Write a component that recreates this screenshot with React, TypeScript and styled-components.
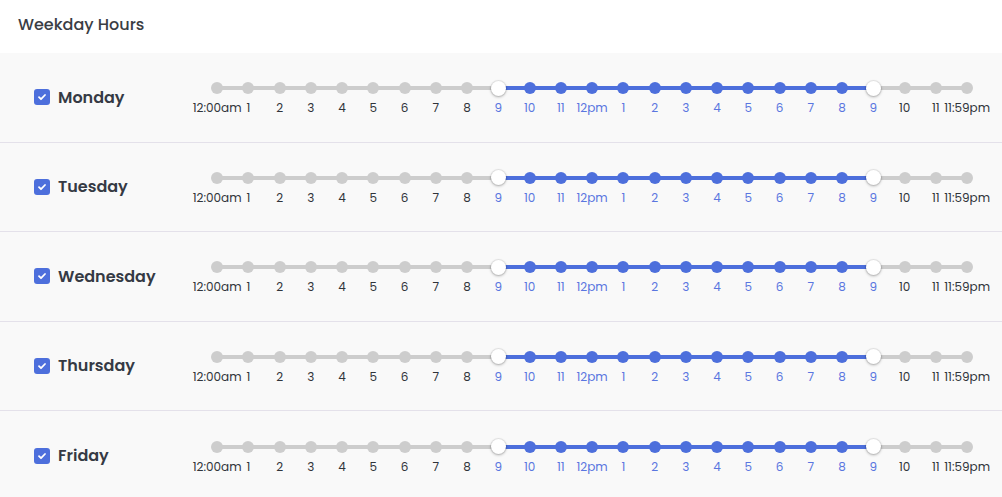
import React from 'react';
import styled, { createGlobalStyle } from 'styled-components';

const GlobalStyle = createGlobalStyle`
    html, body {
        margin: 0;
        padding: 0;
        background: #ffffff;
        font-family: Poppins, Inter, "Noto Sans", sans-serif;
        color: #333840;
    }
`;

const BLUE = '#4d6fdc';
const GRAY = '#cdcdcd';
const STEP = 31.25;

const Page = styled.div`
    width: 1002px;
`;

const Header = styled.div`
    height: 53px;
    display: flex;
    align-items: center;
    padding-left: 18px;
    padding-bottom: 4px;
    box-sizing: border-box;
    font-size: 16px;
    font-weight: 500;
    color: #3a3d44;
`;

const Row = styled.div`
    height: 89.5px;
    display: flex;
    align-items: center;
    background: #f9f9f9;
    border-bottom: 1px solid #e4e1ea;
    box-sizing: border-box;

    &:last-child {
        border-bottom: none;
    }
`;

const DayCell = styled.label`
    width: 201.5px;
    box-sizing: border-box;
    padding-left: 34px;
    display: flex;
    align-items: center;
    gap: 8px;
    font-size: 16px;
    font-weight: 600;
    color: #353a44;
`;

const Check = styled.span`
    width: 16px;
    height: 16px;
    border-radius: 3px;
    background: ${BLUE};
    display: inline-flex;
    align-items: center;
    justify-content: center;
`;

const Slider = styled.div`
    display: grid;
    grid-template-columns: repeat(25, ${STEP}px);
    margin-top: 2px;
`;

const Stop = styled.div`
    display: flex;
    flex-direction: column;
    align-items: center;
    gap: 4px;
`;

const DotArea = styled.div<{ $left?: string; $right?: string }>`
    position: relative;
    width: 100%;
    height: 16px;
    display: flex;
    align-items: center;
    justify-content: center;

    &::before,
    &::after {
        content: '';
        position: absolute;
        top: 6px;
        height: 4px;
        width: 50%;
    }
    &::before {
        left: 0;
        background: ${(p) => p.$left || 'transparent'};
    }
    &::after {
        right: 0;
        background: ${(p) => p.$right || 'transparent'};
    }
`;

const Dot = styled.span<{ $on: boolean }>`
    position: relative;
    z-index: 1;
    width: 12px;
    height: 12px;
    border-radius: 50%;
    background: ${(p) => (p.$on ? BLUE : GRAY)};
`;

const Handle = styled.span`
    position: relative;
    z-index: 2;
    width: 15px;
    height: 15px;
    border-radius: 50%;
    background: #ffffff;
    box-shadow: 0 0 0 1px rgba(0, 0, 0, 0.06), 0 1px 3px rgba(0, 0, 0, 0.3);
`;

const Mark = styled.span<{ $on: boolean }>`
    font-size: 12px;
    line-height: 16px;
    white-space: nowrap;
    color: ${(p) => (p.$on ? '#5a76e0' : '#30343a')};
`;

const days = ['Monday', 'Tuesday', 'Wednesday', 'Thursday', 'Friday'];

const labels = Array.from({ length: 25 }, (_, i) => {
    if (i === 0) return '12:00am';
    if (i === 24) return '11:59pm';
    if (i === 12) return '12pm';
    return String(i % 12);
});

const START = 9;
const END = 21;

const CheckIcon = () => (
    <svg width="10" height="10" viewBox="0 0 10 10">
        <path d="M2 5.2l2 2 4-4.2" fill="none" stroke="#fff" strokeWidth="1.8" strokeLinecap="round" strokeLinejoin="round" />
    </svg>
);

const HourSlider: React.FC = () => (
    <Slider>
        {labels.map((label, i) => {
            const inRange = i >= START && i <= END;
            const left = i === 0 ? undefined : i > START && i <= END ? BLUE : GRAY;
            const right = i === 24 ? undefined : i >= START && i < END ? BLUE : GRAY;
            return (
                <Stop key={i}>
                    <DotArea $left={left} $right={right}>
                        {i === START || i === END ? <Handle /> : <Dot $on={inRange} />}
                    </DotArea>
                    <Mark $on={inRange}>{label}</Mark>
                </Stop>
            );
        })}
    </Slider>
);

export default function App() {
    return (
        <Page>
            <GlobalStyle />
            <Header>Weekday Hours</Header>
            {days.map((day) => (
                <Row key={day}>
                    <DayCell>
                        <Check>
                            <CheckIcon />
                        </Check>
                        {day}
                    </DayCell>
                    <HourSlider />
                </Row>
            ))}
        </Page>
    );
}
